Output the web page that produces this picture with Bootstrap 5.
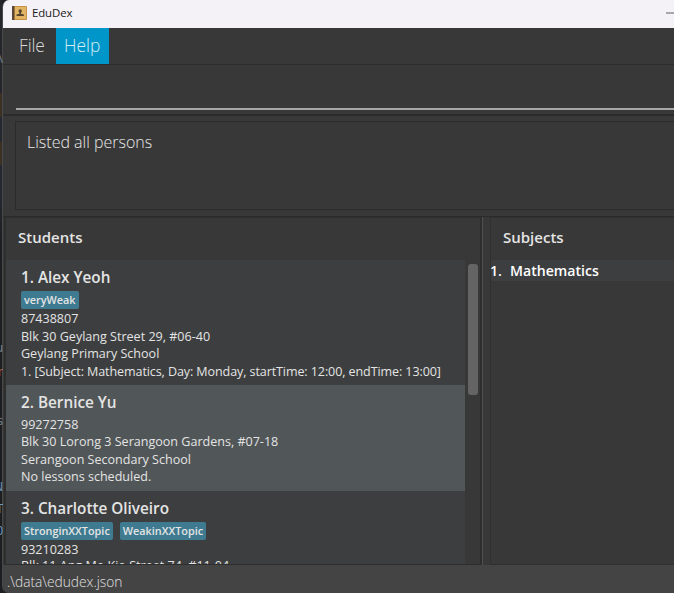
<!DOCTYPE html>
<html lang="en">
<head>
<meta charset="utf-8">
<meta name="viewport" content="width=device-width, initial-scale=1">
<title>EduDex</title>
<link href="https://cdn.jsdelivr.net/npm/bootstrap@5.3.0/dist/css/bootstrap.min.css" rel="stylesheet">
<style>
body{width:674px;height:593px;overflow:hidden;background:#1f2024;font-family:"Open Sans","Noto Sans",sans-serif;color:#e4e4e4;line-height:1}
.behind{width:2px;font-size:12px;color:#7d8790;background:linear-gradient(#25262c 0 93px,#3c3023 93px 117px,#25282f 117px 142px,#3c3023 142px 165px,#25282f 165px 200px,#1d1e22 240px)}
.behind span{position:absolute;left:-5px;width:8px;overflow:hidden;direction:rtl}
.behind .warm{color:#b06a45}
.behind .cool{color:#6d9cc0}
.win{background:#383838;border-left:1px solid #48494b;border-radius:7px 0 0 7px}
.titlebar{height:28px;background:#f4f1f7;color:#202020;font-size:11.4px;letter-spacing:-.1px;padding:0 0 2px 9px}
.titlebar .name{margin-left:5px}
.titlebar .min{width:8px;height:2px;background:#aaa8ad}
.menus{height:37px;border-bottom:1px solid #2d2d2d;font-weight:300;font-size:17.4px;padding-left:8px}
.menus a{height:36px;padding:0 8px;color:#d8d8d8;text-decoration:none}
.menus .file{width:45px;letter-spacing:-.1px}
.menus .on{width:53px;background:#0096c9;color:#d5edf6}
.cmd{height:51px;padding:0 0 4px 13px;border-bottom:2px solid #2b2b2b}
.cmd div{height:100%;border-bottom:2px solid #a6a6a6}
.result{height:101px;padding:5px 0 6px 12px;border-bottom:1px solid #2b2b2b}
.result div{height:89px;border:1px solid #2b2b2b;border-right:0;padding:12px 0 0 11px;font-weight:300;font-size:16px;color:#e8e8e8}
.mainrow{height:348px}
.left-pane{width:478px;margin-left:1px;border:1px solid #2e2e2e;border-width:1px 2px 1px 2px}
.right-pane{margin-left:7px;border:1px solid #303030;border-width:1px 0 1px 1px}
.divider{width:1px;background:#505050}
.heading{height:42px;font-size:15px;font-weight:600;padding:12px 0 0 12px}
.people{width:459px;overflow:hidden;background:#3c3e3f}
.person{background:#3c3e3f;padding:7px 0 5px 15px;font-size:12.55px;line-height:17.5px;white-space:nowrap}
.person.alt{background:#515658}
.person h2{font-size:15.3px;line-height:20px;font-weight:600;margin:0 0 3px}
.person.alt h2{margin-bottom:3.6px}
.person.alt{padding-bottom:5.4px}
.person p{margin:0}
.person .lesson{letter-spacing:-.1px}
.person .cut{margin-top:-1px}
.tags{height:20px;gap:7px;padding-top:1px}
.tag{background:#3e7b91;border-radius:2px;font-size:10.85px;font-weight:600;line-height:18px;height:18px;padding:0 3px}
.thumb{width:10px;height:131px;margin:4px 0 0 3px;border-radius:3px;background:#646464}
.subject{height:21px;background:#3c3e3f;font-size:14.1px;font-weight:600;color:#fff;line-height:21px}
.subject span{width:19px;margin-left:-1px;margin-right:1px}
.status{height:28px;background:#444;font-weight:300;font-size:13.75px;padding:0 0 0 4px;line-height:33px;color:#e0e0e0}
</style>
<script src="https://cdn.jsdelivr.net/npm/bootstrap@5.3.0/dist/js/bootstrap.bundle.min.js"></script>
</head>
<body class="d-flex m-0">
<div class="behind flex-shrink-0" aria-hidden="true">
  <span style="top:53px">\</span><span style="top:342px">u</span><span class="warm" style="top:366px">r</span><span style="top:415px">s</span><span class="cool" style="top:481px">N</span><span class="cool" style="top:503px">T</span><span class="cool" style="top:525px">0</span>
</div>
<div class="win flex-grow-1 d-flex flex-column overflow-hidden">
  <header class="titlebar d-flex align-items-center flex-shrink-0">
    <svg width="15" height="14" viewBox="0 0 15 14"><rect width="15" height="14" rx="1" fill="#c69346"/><rect x="3" y="1" width="11" height="12" fill="#e2b565"/><rect width="2.4" height="14" fill="#5a4635"/><circle cx="8.2" cy="5" r="1.7" fill="#54432f"/><path d="M7.4 6h1.600v1.800l2.900.7v1.500h-7.400V8.500l2.900-.7z" fill="#54432f"/></svg>
    <span class="name">EduDex</span><span class="min ms-auto"></span>
  </header>
  <nav class="menus d-flex flex-shrink-0">
    <a href="#" class="file d-flex align-items-center">File</a><a href="#" class="on d-flex align-items-center">Help</a>
  </nav>
  <div class="cmd flex-shrink-0"><div></div></div>
  <div class="result flex-shrink-0"><div>Listed all persons</div></div>
  <main class="mainrow d-flex flex-shrink-0">
    <section class="left-pane d-flex flex-column flex-shrink-0">
      <div class="heading flex-shrink-0">Students</div>
      <div class="d-flex flex-grow-1 overflow-hidden">
        <div class="people flex-shrink-0">
          <article class="person"><h2>1. Alex Yeoh</h2><div class="tags d-flex"><span class="tag">veryWeak</span></div><p>87438807</p><p>Blk 30 Geylang Street 29, #06-40</p><p>Geylang Primary School</p><p class="lesson">1. [Subject: Mathematics, Day: Monday, startTime: 12:00, endTime: 13:00]</p></article>
          <article class="person alt"><h2>2. Bernice Yu</h2><p>99272758</p><p>Blk 30 Lorong 3 Serangoon Gardens, #07-18</p><p>Serangoon Secondary School</p><p>No lessons scheduled.</p></article>
          <article class="person"><h2>3. Charlotte Oliveiro</h2><div class="tags d-flex"><span class="tag">StronginXXTopic</span><span class="tag">WeakinXXTopic</span></div><p>93210283</p><p class="cut">Blk 11 Ang Mo Kio Street 74, #11-04</p></article>
        </div>
        <div class="thumb"></div>
      </div>
    </section>
    <div class="divider"></div>
    <section class="right-pane flex-grow-1">
      <div class="heading">Subjects</div>
      <div class="subject d-flex"><span>1.</span>Mathematics</div>
    </section>
  </main>
  <footer class="status flex-shrink-0">.\data\edudex.json</footer>
</div>
</body>
</html>
